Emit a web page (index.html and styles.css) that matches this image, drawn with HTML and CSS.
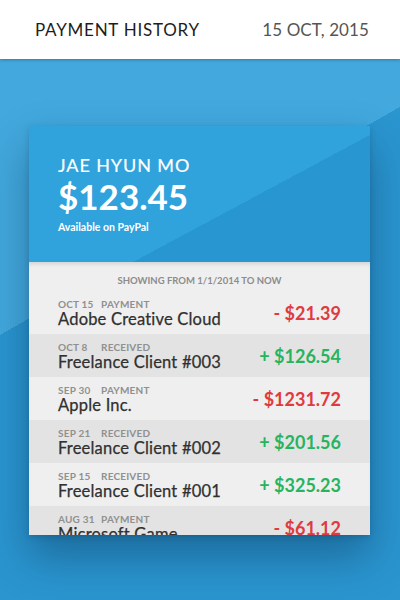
FILE: index.html
```html
<!DOCTYPE html>
<html>
<head>
<meta charset="utf-8">
<link rel="stylesheet" href="styles.css">
</head>
<body>
<div class="app">
  <header class="topbar">
    <span class="title">PAYMENT HISTORY</span>
    <span class="date">15 OCT, 2015</span>
  </header>
  <main class="stage">
    <section class="card">
      <div class="card-head">
        <div class="owner">JAE HYUN MO</div>
        <div class="balance">$123.45</div>
        <div class="source">Available on PayPal</div>
      </div>
      <div class="card-body">
        <div class="range">SHOWING FROM 1/1/2014 TO NOW</div>
        <ul class="rows">
          <li class="row">
            <div class="info">
              <div class="meta"><span class="day">OCT 15</span><span class="kind">PAYMENT</span></div>
              <div class="name">Adobe Creative Cloud</div>
            </div>
            <div class="amount neg">- $21.39</div>
          </li>
          <li class="row alt">
            <div class="info">
              <div class="meta"><span class="day">OCT 8</span><span class="kind">RECEIVED</span></div>
              <div class="name">Freelance Client #003</div>
            </div>
            <div class="amount pos">+ $126.54</div>
          </li>
          <li class="row">
            <div class="info">
              <div class="meta"><span class="day">SEP 30</span><span class="kind">PAYMENT</span></div>
              <div class="name">Apple Inc.</div>
            </div>
            <div class="amount neg">- $1231.72</div>
          </li>
          <li class="row alt">
            <div class="info">
              <div class="meta"><span class="day">SEP 21</span><span class="kind">RECEIVED</span></div>
              <div class="name">Freelance Client #002</div>
            </div>
            <div class="amount pos">+ $201.56</div>
          </li>
          <li class="row">
            <div class="info">
              <div class="meta"><span class="day">SEP 15</span><span class="kind">RECEIVED</span></div>
              <div class="name">Freelance Client #001</div>
            </div>
            <div class="amount pos">+ $325.23</div>
          </li>
          <li class="row alt">
            <div class="info">
              <div class="meta"><span class="day">AUG 31</span><span class="kind">PAYMENT</span></div>
              <div class="name">Microsoft Game</div>
            </div>
            <div class="amount neg">- $61.12</div>
          </li>
        </ul>
      </div>
    </section>
  </main>
</div>
</body>
</html>
```
FILE: styles.css
```css
* { box-sizing: border-box; }
html, body { margin: 0; padding: 0; }
body {
  font-family: "Lato", "Liberation Sans", sans-serif;
  width: 400px;
  height: 600px;
  overflow: hidden;
}
.app {
  width: 400px;
  height: 600px;
  display: flex;
  flex-direction: column;
  background: linear-gradient(150.3deg, #42a8dd 291px, #2a95cf 291px);
}
.topbar {
  height: 59px;
  flex: none;
  background: #fff;
  display: flex;
  align-items: center;
  justify-content: space-between;
  padding: 0 31px 0 35px;
  box-shadow: 0 1px 3px rgba(0, 0, 0, 0.25);
  position: relative;
  z-index: 2;
}
.title {
  font-size: 17px;
  color: #1d1d1d;
  letter-spacing: 0.75px;
}
.date {
  font-size: 17px;
  color: #555;
  letter-spacing: 0.1px;
}
.stage {
  flex: 1;
  padding: 67px 30px 0 29px;
}
.card {
  width: 341px;
  box-shadow: 0 22px 40px rgba(0, 30, 60, 0.35), 0 2px 6px rgba(0, 0, 0, 0.15);
}
.card-head {
  height: 136px;
  padding: 28px 29px 0;
  color: #fff;
  background: linear-gradient(151.8deg, #30a2dc 169px, #2896d1 169px);
}
.owner {
  font-size: 18px;
  line-height: 22px;
  letter-spacing: 0.9px;
  -webkit-text-stroke: 0.2px #fff;
}
.balance {
  font-size: 35px;
  line-height: 38px;
  font-weight: 700;
  margin-top: 1px;
}
.source {
  font-size: 10.5px;
  line-height: 14px;
  font-weight: 700;
  margin-top: 5px;
}
.card-body {
  height: 273px;
  overflow: hidden;
  background: #efefef;
  box-shadow: inset 0 4px 4px -2px rgba(0, 0, 0, 0.12);
}
.range {
  height: 29px;
  padding-top: 13px;
  text-align: center;
  font-size: 9.5px;
  line-height: 12px;
  font-weight: 700;
  color: #8c8c8c;
}
.rows {
  list-style: none;
  margin: 0;
  padding: 0;
}
.row {
  height: 43px;
  display: flex;
  align-items: center;
  justify-content: space-between;
  padding: 0 29px;
}
.row.alt { background: #e3e3e3; }
.info {
  display: flex;
  flex-direction: column;
}
.meta {
  display: flex;
  font-size: 10px;
  line-height: 12px;
  font-weight: 700;
  color: #909090;
  letter-spacing: 0.2px;
}
.day { width: 43px; }
.name {
  font-size: 16.5px;
  line-height: 18px;
  color: #303030;
  letter-spacing: 0.2px;
  -webkit-text-stroke: 0.25px #303030;
}
.amount {
  font-size: 18px;
  font-weight: 700;
}
.neg { color: #e03a3e; }
.pos { color: #27b45e; }
```
